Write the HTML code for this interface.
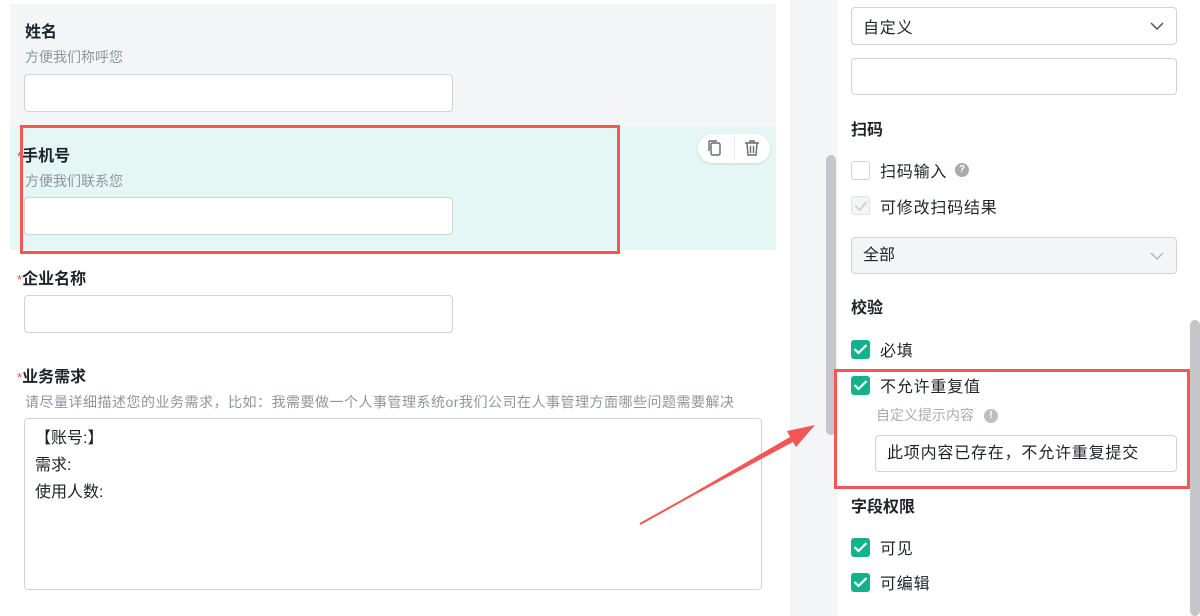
<!DOCTYPE html>
<html><head><meta charset="utf-8"><style>
*{box-sizing:border-box;margin:0;padding:0}
body{width:1200px;height:616px;overflow:hidden;position:relative;background:#fff;font-family:"Liberation Sans","Noto Sans CJK SC",sans-serif;color:#1f2329}
.a{position:absolute}
.lbl{font-size:16px;font-weight:bold;color:#1f2329}
.sub{font-size:14px;color:#8f959e}
.inp{position:absolute;background:#fff;border:1px solid #d0d3d6;border-radius:4px}
.star{color:#f54a45;font-size:13px;font-weight:normal}
.cb{position:absolute;width:19px;height:19px;border-radius:3px;background:#14b28c}
.cb svg{position:absolute;left:2px;top:3px}
.rt{font-size:16px;color:#1f2329;letter-spacing:.8px}
</style></head><body>
<div class="a" style="left:10px;top:4px;width:766px;height:123px;background:#f4f5f7"></div>
<div class="a" style="left:10px;top:127px;width:766px;height:123px;background:#e5f7f4"></div>
<div class="a lbl" style="left:25px;top:18px">姓名</div>
<div class="a sub" style="left:25px;top:47px">方便我们称呼您</div>
<div class="inp" style="left:24px;top:74px;width:429px;height:38px"></div>
<div class="a lbl" style="left:17px;top:142px"><span class="star">*</span>手机号</div>
<div class="a sub" style="left:25px;top:171px">方便我们联系您</div>
<div class="inp" style="left:24px;top:197px;width:429px;height:38px"></div>
<div class="a" style="left:698px;top:134px;width:72px;height:29px;background:#fff;border-radius:15px;box-shadow:0 1px 3px rgba(0,0,0,.12)"></div>
<div class="a" style="left:734px;top:136px;width:1px;height:25px;background:#e5e6e8"></div>
<svg class="a" style="left:706px;top:139px" width="18" height="18" viewBox="0 0 18 18" fill="none" stroke="#646a73" stroke-width="1.4"><rect x="5" y="4" width="9" height="12" rx="1.5"/><path d="M3 12V3a1 1 0 0 1 1-1h7"/></svg>
<svg class="a" style="left:743px;top:139px" width="18" height="18" viewBox="0 0 18 18" fill="none" stroke="#646a73" stroke-width="1.4"><path d="M2 4h14M7 4V2h4v2M4 4l1 12h8l1-12M7.5 7v7M10.5 7v7"/></svg>
<div class="a" style="left:20px;top:125px;width:600px;height:129px;border:3px solid #f25656"></div>
<div class="a lbl" style="left:17px;top:265px"><span class="star">*</span>企业名称</div>
<div class="inp" style="left:24px;top:295px;width:429px;height:38px"></div>
<div class="a lbl" style="left:17px;top:363px"><span class="star">*</span>业务需求</div>
<div class="a sub" style="left:25px;top:392px;letter-spacing:.5px">请尽量详细描述您的业务需求，比如：我需要做一个人事管理系统or我们公司在人事管理方面哪些问题需要解决</div>
<div class="inp" style="left:24px;top:418px;width:738px;height:172px;padding:6px 10px;font-size:16px;line-height:27px">【账号:】<br>需求:<br>使用人数:</div>
<div class="a" style="left:790px;top:0;width:48px;height:616px;background:#f4f5f7"></div>
<div class="a" style="left:826px;top:155px;width:10px;height:280px;border-radius:5px;background:#c4c6ca"></div>
<div class="a" style="left:1190px;top:320px;width:10px;height:296px;border-radius:5px;background:#c4c6ca"></div>
<div class="inp" style="left:851px;top:7px;width:326px;height:38px;padding-left:11px;padding-top:3px;line-height:36px;font-size:16px;letter-spacing:.8px">自定义<svg class="a" style="right:12px;top:14px" width="14" height="9" viewBox="0 0 14 9" fill="none" stroke="#4e5359" stroke-width="1.5"><path d="M1 1l6 6 6-6"/></svg></div>
<div class="inp" style="left:851px;top:58px;width:326px;height:37px"></div>
<div class="a lbl" style="left:851px;top:116px;font-size:16px">扫码</div>
<div class="a" style="left:851px;top:161px;width:19px;height:19px;border:1px solid #d0d3d6;border-radius:3px;background:#fff"></div>
<div class="a rt" style="left:880px;top:158px">扫码输入</div>
<div class="a" style="left:955px;top:163px;width:14px;height:14px;border-radius:50%;background:#a8abb0;color:#fff;font-size:10px;text-align:center;line-height:14px;font-weight:bold">?</div>
<div class="a" style="left:851px;top:196px;width:19px;height:19px;border:1px solid #e0e2e5;border-radius:3px;background:#f4f5f7"><svg style="position:absolute;left:2px;top:3px" width="14" height="12" viewBox="0 0 14 12" fill="none" stroke="#d0d3d6" stroke-width="2"><path d="M1.5 6l4 4 7-8"/></svg></div>
<div class="a rt" style="left:880px;top:194px">可修改扫码结果</div>
<div class="inp" style="left:851px;top:237px;width:326px;height:37px;background:#f4f5f7;padding-left:11px;line-height:36px;font-size:16px">全部<svg class="a" style="right:12px;top:14px" width="14" height="9" viewBox="0 0 14 9" fill="none" stroke="#b5b8bd" stroke-width="1.5"><path d="M1 1l6 6 6-6"/></svg></div>
<div class="a lbl" style="left:851px;top:294px">校验</div>
<div class="cb" style="left:851px;top:340px"><svg width="15" height="12" viewBox="0 0 15 12" fill="none" stroke="#fff" stroke-width="2.2"><path d="M1.5 6l4 4 8-8"/></svg></div>
<div class="a rt" style="left:880px;top:337px">必填</div>
<div class="cb" style="left:851px;top:376px"><svg width="15" height="12" viewBox="0 0 15 12" fill="none" stroke="#fff" stroke-width="2.2"><path d="M1.5 6l4 4 8-8"/></svg></div>
<div class="a rt" style="left:880px;top:373px">不允许重复值</div>
<div class="a sub" style="left:876px;top:405px;font-size:14px;color:#a8abb0">自定义提示内容</div>
<div class="a" style="left:984px;top:409px;width:14px;height:14px;border-radius:50%;background:#bbbec2;color:#fff;font-size:10px;text-align:center;line-height:14px;font-weight:bold">!</div>
<div class="inp" style="left:875px;top:435px;width:302px;height:37px;padding-left:11px;line-height:36px;font-size:16px;letter-spacing:.8px">此项内容已存在，不允许重复提交</div>
<div class="a" style="left:834px;top:369px;width:356px;height:120px;border:3px solid #f25656"></div>
<div class="a lbl" style="left:851px;top:493px">字段权限</div>
<div class="cb" style="left:851px;top:538px"><svg width="15" height="12" viewBox="0 0 15 12" fill="none" stroke="#fff" stroke-width="2.2"><path d="M1.5 6l4 4 8-8"/></svg></div>
<div class="a rt" style="left:880px;top:535px">可见</div>
<div class="cb" style="left:851px;top:573px"><svg width="15" height="12" viewBox="0 0 15 12" fill="none" stroke="#fff" stroke-width="2.2"><path d="M1.5 6l4 4 8-8"/></svg></div>
<div class="a rt" style="left:880px;top:570px">可编辑</div>
<svg class="a" style="left:0;top:0" width="1200" height="616"><path d="M640 524L790 437L787 431L815 425L796 447L793 442Z" fill="#f25656"/><line x1="640" y1="524" x2="798" y2="436" stroke="#f25656" stroke-width="2"/></svg>
</body></html>
